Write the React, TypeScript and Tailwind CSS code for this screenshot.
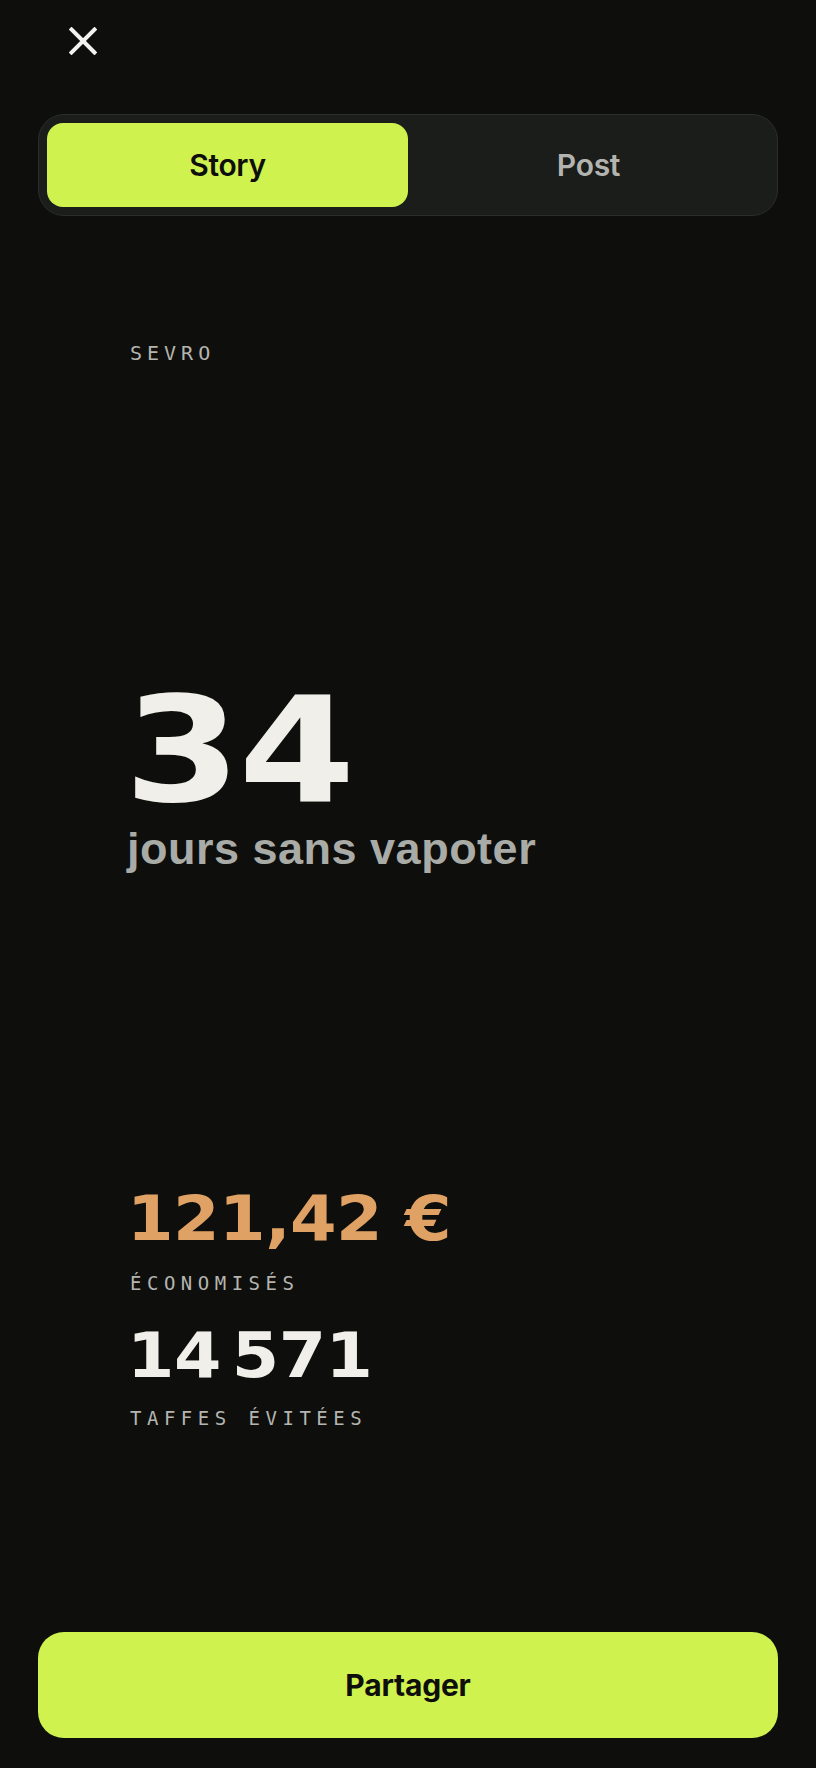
import React from "react";

const mono = { fontFamily: '"DejaVu Sans Mono", "Liberation Mono", monospace' } as const;

export default function App() {
  return (
    <div className="w-[816px] h-[1768px] bg-[#0e0e0d] flex flex-col px-[38px] overflow-hidden">
      {/* Header */}
      <div className="h-[114px] shrink-0">
        <button className="mt-[27px] ml-[31px] block" aria-label="Fermer">
          <svg width="28" height="28" viewBox="0 0 28 28" fill="none">
            <path d="M2.5 2.5L25.5 25.5M25.5 2.5L2.5 25.5" stroke="#f2f2ee" strokeWidth="4" strokeLinecap="square" />
          </svg>
        </button>
      </div>

      {/* Segmented control */}
      <div className="h-[102px] shrink-0 rounded-[26px] border border-[#2a2d29] bg-[#1b1d1b] p-[8px] flex">
        <div className="flex-1 rounded-[16px] bg-[#cff24f] flex items-center justify-center">
          <span className="font-['Inter'] font-semibold text-[30px] text-[#0e0e0d] tracking-[-0.3px]">Story</span>
        </div>
        <div className="flex-1 rounded-[16px] flex items-center justify-center">
          <span className="font-['Inter'] font-semibold text-[30px] text-[#b3b4af] tracking-[-0.3px]">Post</span>
        </div>
      </div>

      {/* Story card content */}
      <div className="pl-[92px] flex flex-col items-start">
        <div style={mono} className="mt-[127px] text-[20px] leading-none tracking-[5px] text-[#b4b5b0]">SEVRO</div>

        <div className="mt-[323px] -ml-[6px] font-['DejaVu_Sans'] font-bold text-[146px] leading-[128px] text-[#f0efea] tracking-[-2px] origin-left scale-x-[1.15]">
          34
        </div>

        <div className="mt-[12px] font-['Liberation_Sans'] font-bold text-[45px] leading-none text-[#a9aba6] tracking-[0.5px] -ml-[3px]">
          jours sans vapoter
        </div>

        <div className="mt-[317px] -ml-[3px] font-['DejaVu_Sans'] font-bold text-[62px] leading-none text-[#e0a264] origin-left scale-x-[1.08] tracking-[-0.5px] whitespace-nowrap">
          121,42 €
        </div>

        <div style={mono} className="mt-[24px] text-[19px] leading-none tracking-[5.5px] text-[#b4b5b0]">ÉCONOMISÉS</div>

        <div className="mt-[32px] -ml-[3px] font-['DejaVu_Sans'] font-bold text-[62px] leading-none text-[#f0efea] origin-left scale-x-[1.1] tracking-[-0.5px] whitespace-nowrap">
          14<span className="ml-[10px]">571</span>
        </div>

        <div style={mono} className="mt-[22px] text-[19px] leading-none tracking-[5.5px] text-[#b4b5b0]">TAFFES ÉVITÉES</div>
      </div>

      {/* Share button */}
      <button className="mt-auto mb-[30px] h-[106px] shrink-0 w-full rounded-[26px] bg-[#cff24f] flex items-center justify-center">
        <span className="font-['Inter'] font-bold text-[30px] text-[#0e0e0d] tracking-[-0.2px]">Partager</span>
      </button>
    </div>
  );
}
